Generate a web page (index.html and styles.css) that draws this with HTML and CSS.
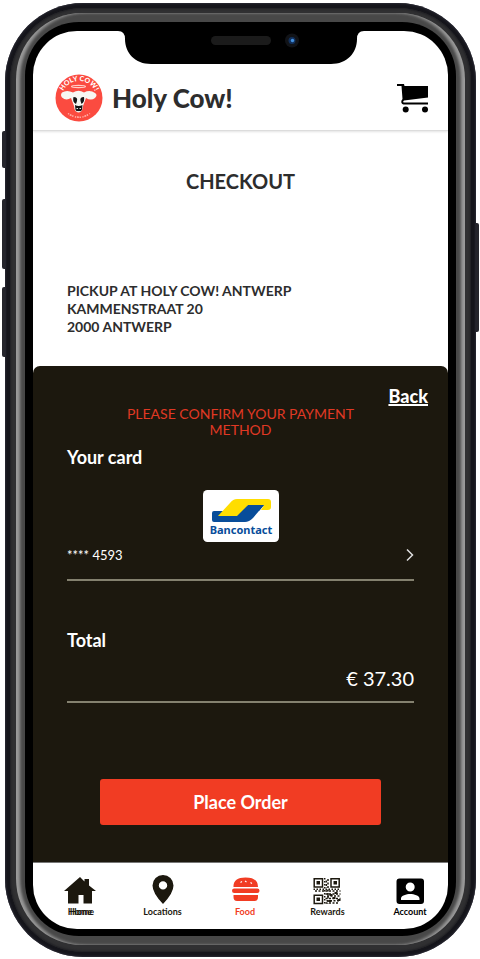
FILE: index.html
```html
<!DOCTYPE html>
<html lang="en">
<head>
<meta charset="utf-8">
<meta name="viewport" content="width=device-width, initial-scale=1">
<title>Holy Cow! Checkout</title>
<link rel="stylesheet" href="styles.css">
</head>
<body>
<div class="phone">
  <span class="key key-mute"></span>
  <span class="key key-up"></span>
  <span class="key key-down"></span>
  <span class="key key-power"></span>
  <div class="band">
    <div class="rim">
      <div class="bezel">
        <div class="screen">
          <svg class="notch" viewBox="0 0 246 33" aria-hidden="true">
            <path d="M0 0H246Q239 0 239 8C239 22 229 33 213 33H33C17 33 7 22 7 8Q7 0 0 0Z" fill="#000"/>
            <rect x="93" y="5" width="60" height="9" rx="4.500" fill="#1b1b1b"/>
            <circle cx="174" cy="9.500" r="7" fill="#111317"/>
            <circle cx="174" cy="9.500" r="3.500" fill="#12305c"/>
            <circle cx="174.500" cy="9.500" r="1.700" fill="#4290de"/>
          </svg>
          <header class="header">
            <a class="brand" href="#">
              <svg class="logo" viewBox="0 0 48 48" aria-hidden="true">
                <defs><path id="arc" d="M6.500 24.500A17.500 17.500 0 0 1 41.500 24.500"/></defs>
                <circle cx="24" cy="24" r="23.500" fill="#fb4b40"/>
                <text class="logo-text" text-anchor="middle"><textPath href="#arc" startOffset="50%">HOLY COW!</textPath></text>
                <ellipse cx="23.500" cy="12.500" rx="7" ry="1.100" fill="none" stroke="#ffd0c8" stroke-width="1.200"/>
                <path d="M18 18.500Q23.500 15 29 18.500Q35 15.500 40 19Q43 21 40 24Q36 27 31 24L28 32Q27.500 38.500 23.500 38.500Q19.500 38.500 19 32L16 24Q11 27 7 23.500Q5 21 7 18.500Q12 15.500 18 18.500Z" fill="#f7f7f2"/>
                <path d="M18.500 23Q23 23 22 27L21 30Q17 28 18.500 23ZM29 23Q24.500 23 25.500 27L26.500 30Q30 28 29 23ZM20 31Q23.500 33 27.500 31L27 36Q23.500 40 20.500 36Z" fill="#151515"/>
                <path d="M21.500 34.500H23M24.500 34.500H26M22 37.500H25.500" stroke="#fff" stroke-width=".9"/>
                <path d="M13 39.500Q24 47 35 39.500" fill="none" stroke="#ffb3aa" stroke-width="1.500" stroke-dasharray="1.200 .8 2 .7 1.400 1.500"/>
              </svg>
              <span class="brand-name">Holy Cow!</span>
            </a>
            <button class="cart" type="button" aria-label="Cart">
              <svg viewBox="0 0 32 29" aria-hidden="true">
                <path d="M0 0H7L7.500 2H31V13.500L7 16.500Q5.500 17.500 6.500 18.500H31V20.500H6.500Q3.500 19.500 4.500 16.500L5.500 15L4.500 2H0Z"/>
                <circle cx="8.700" cy="25.500" r="3"/><circle cx="28" cy="25.500" r="3"/>
              </svg>
            </button>
          </header>
          <main>
            <section class="summary">
              <h1>CHECKOUT</h1>
              <address>PICKUP AT HOLY COW! ANTWERP<br>KAMMENSTRAAT 20<br>2000 ANTWERP</address>
            </section>
            <section class="payment">
              <a class="back" href="#">Back</a>
              <p class="notice">PLEASE CONFIRM YOUR PAYMENT METHOD</p>
              <h2>Your card</h2>
              <svg class="bancontact" viewBox="0 0 76 52" role="img" aria-label="Bancontact">
                <rect width="76" height="52" rx="4.500" fill="#fff"/>
                <path d="M9 23Q9 21 11 21H27L45 15H61L50 28Q46 32 42 32H11Q9 32 9 30Z" fill="#084d9a"/>
                <path d="M15 26L27 13Q30 9 34 9H65Q68 9 68 12V17Q68 20 65 20H58L61 15H45L34 26Z" fill="#ffdd00"/>
                <path d="M61 15L56 21H50L45 15Z" fill="#084d9a"/>
                <text class="bancontact-text" x="38" y="44" text-anchor="middle">Bancontact</text>
              </svg>
              <button class="card-row" type="button">
                <span>**** 4593</span>
                <svg class="chevron" viewBox="0 0 8 14" aria-hidden="true"><path d="M1 1.500L6.500 7L1 12.500" fill="none" stroke="#ddd" stroke-width="1.500"/></svg>
              </button>
              <h2 class="total-label">Total</h2>
              <p class="amount">€ 37.30</p>
              <button class="order" type="button">Place Order</button>
            </section>
          </main>
          <nav class="tabs">
            <a href="#">
              <svg viewBox="0 0 32 30" aria-hidden="true"><path d="M16 2L20.500 6.500V4H25V10.500L32 16H28V28.500H19.500V20H14.500V28.500H4V16H0Z"/></svg>
              <span class="ghosted">Home</span>
            </a>
            <a href="#">
              <svg viewBox="0 0 32 30" aria-hidden="true"><path fill-rule="evenodd" d="M16 0A10.500 10.500 0 0 1 26.500 10.500Q26.500 18 16 29Q5.500 18 5.500 10.500A10.500 10.500 0 0 1 16 0ZM16 6.200A4.200 4.200 0 1 0 16 14.600A4.200 4.200 0 1 0 16 6.200Z"/></svg>
              <span>Locations</span>
            </a>
            <a class="active" href="#">
              <svg viewBox="0 0 32 30" aria-hidden="true">
                <path d="M4.500 12Q4 2.500 16.500 2.500T29 12Z"/>
                <rect x="3" y="13.500" width="27.500" height="4.500" rx="2.200"/>
                <path d="M4.500 20H29V22Q29 26 25.500 26H8Q4.500 26 4.500 22Z"/>
                <path d="M11.500 7.500L13 6.500M16 6L17.500 7M21.500 7.500L23 8.500" stroke="#fff" stroke-width="1.100"/>
              </svg>
              <span>Food</span>
            </a>
            <a href="#">
              <svg viewBox="1.500 0 32 30" aria-hidden="true">
                <path fill="none" stroke="#1c180e" stroke-width="1.500" d="M3.700 3.700H12V12H3.700ZM20.500 3.700H28.700V12H20.500ZM3.700 20.200H12V28.400H3.700Z"/>
                <path d="M6 6H9.500V9.500H6ZM23 6H26.500V9.500H23ZM6 22.500H9.500V26H6Z"/>
                <path fill="none" stroke="#1c180e" stroke-width="1.500" stroke-dasharray="1.500 1.500" d="M14.200 3V29M3 14.200H30"/>
                <path fill="none" stroke="#1c180e" stroke-width="1.500" stroke-dasharray="2 1.500" d="M17.500 4V29M15.800 5.500V13M4.500 16H30M15 19H30M16.500 21H29M15 23.500H30M16 25.800H30M15 28H29"/>
                <path d="M19 19H22V21H19ZM24 17H27V19H24ZM22 22H25V24H22ZM27 24H30V26H27ZM18 25H21V27H18Z"/>
              </svg>
              <span>Rewards</span>
            </a>
            <a class="account" href="#">
              <svg viewBox="0 0 32 30" aria-hidden="true"><path fill-rule="evenodd" d="M5.500 3.500H27Q30 3.500 30 6.500V26Q30 29 27 29H5.500Q2.500 29 2.500 26V6.500Q2.500 3.500 5.500 3.500ZM16.200 7.500A4.500 4.500 0 1 0 16.200 16.500A4.500 4.500 0 1 0 16.200 7.500ZM7 25H25.500V23.500C25.500 20.500 20 19 16.200 19S7 20.500 7 23.500Z"/></svg>
              <span>Account</span>
            </a>
          </nav>
        </div>
      </div>
    </div>
  </div>
</div>
</body>
</html>
```

FILE: styles.css
```css
* {
  box-sizing: border-box;
}

body {
  margin: 0;
  padding: 3px 4px 2px 5px;
  background: #fff;
  color: #2d2d2d;
  font-family: Lato, "Liberation Sans", sans-serif;
}

h1, h2, p {
  margin: 0;
}

button {
  border: 0;
  padding: 0;
  background: none;
  color: inherit;
  font: inherit;
  cursor: pointer;
}

a {
  color: inherit;
  text-decoration: none;
}

svg {
  display: block;
}

/* Device frame, from the outer shell to the display */
.phone {
  position: relative;
  padding: 5px;
  border-radius: 78px;
  background: #15151b;
  box-shadow: inset 0 0 2px 1px #292933;
}

.band {
  padding: 5px 6px 7px;
  border-radius: 73px;
  background: #303032;
  box-shadow: inset 0 0 2px 1px #202024;
}

.rim {
  padding: 9px;
  border-radius: 66px;
  background: #484848;
  box-shadow: inset 4px 0 3px #9a9a9a, inset -4px 0 3px #9a9a9a, inset 0 0 2px 1px #111;
}

.bezel {
  padding: 9px 8px 7px;
  border-radius: 54px;
  background: #000;
}

.screen {
  position: relative;
  overflow: hidden;
  border-radius: 44px;
  background: #fff;
}

.key {
  position: absolute;
  left: -3px;
  width: 3px;
  border-radius: 2px 0 0 2px;
  background: #25252c;
}

.key-mute {
  top: 128px;
  height: 37px;
}

.key-up {
  top: 196px;
  height: 70px;
}

.key-down {
  top: 284px;
  height: 70px;
}

.key-power {
  top: 220px;
  right: -3px;
  left: auto;
  height: 109px;
  border-radius: 0 2px 2px 0;
}

.notch {
  position: absolute;
  top: 0;
  left: 50%;
  width: 246px;
  height: 33px;
  transform: translateX(-50%);
}

/* App header */
.header {
  display: flex;
  align-items: center;
  justify-content: space-between;
  padding: 43px 19px 8px 22px;
  border-bottom: 1px solid #dcdcdc;
  box-shadow: 0 1px 2px #e4e4e4;
}

.brand {
  display: flex;
  align-items: center;
  gap: 9px;
}

.logo {
  width: 48px;
  height: 48px;
}

.logo-text {
  fill: #fff;
  font-size: 7px;
  font-weight: 900;
}

.brand-name {
  font-size: 26px;
  font-weight: 900;
  line-height: 32px;
}

.cart svg {
  width: 32px;
  height: 29px;
}

/* Order summary */
.summary {
  padding: 38px 34px 30px;
}

h1 {
  font-size: 20px;
  font-weight: 700;
  line-height: 24px;
  text-align: center;
}

address {
  margin-top: 89px;
  font-size: 14px;
  font-style: normal;
  font-weight: 700;
  line-height: 18px;
}

/* Payment panel */
.payment {
  display: flex;
  flex-direction: column;
  padding: 20px 34px 37px;
  border-radius: 7px 7px 0 0;
  background: #1c180e;
  color: #fff;
}

.back {
  align-self: flex-end;
  margin-right: -14px;
  font-size: 18px;
  font-weight: 900;
  line-height: 20px;
  text-decoration: underline;
  text-decoration-thickness: 2px;
}

.notice {
  padding: 0 48px;
  color: #e03924;
  font-size: 14px;
  line-height: 16px;
  text-align: center;
}

h2 {
  margin-top: 8px;
  font-size: 18px;
  font-weight: 700;
  line-height: 22px;
}

.bancontact {
  align-self: center;
  width: 76px;
  height: 52px;
  margin-top: 22px;
}

.bancontact-text {
  fill: #084d9a;
  font-family: "Noto Sans", sans-serif;
  font-size: 11px;
  font-weight: 700;
}

.card-row {
  display: flex;
  align-items: center;
  justify-content: space-between;
  padding: 3px 0 14px;
  border-bottom: 2px solid #84816f;
  font-size: 13px;
  line-height: 20px;
}

.chevron {
  width: 8px;
  height: 14px;
}

.total-label {
  margin-top: 48px;
}

.amount {
  padding: 15px 0 11px;
  border-bottom: 2px solid #84816f;
  font-size: 20px;
  line-height: 24px;
  text-align: right;
}

.order {
  margin: 76px 33px 0;
  padding: 12px;
  border-radius: 3px;
  background: #f13c23;
  font-size: 18px;
  font-weight: 700;
  line-height: 22px;
}

/* Bottom navigation */
.tabs {
  display: flex;
  justify-content: space-between;
  padding: 12px 13px 11px 22px;
  border-top: 1px solid #777;
  color: #1c180e;
}

.tabs a {
  display: flex;
  flex-direction: column;
  align-items: center;
  width: 50px;
  font-size: 9px;
  font-weight: 700;
  line-height: 13px;
}

.tabs svg {
  width: 32px;
  height: 30px;
  fill: currentColor;
}

.tabs .active {
  color: #f13c23;
}

.tabs .account {
  color: #000;
}

.ghosted {
  text-shadow: 2px 0 currentColor;
}
```
